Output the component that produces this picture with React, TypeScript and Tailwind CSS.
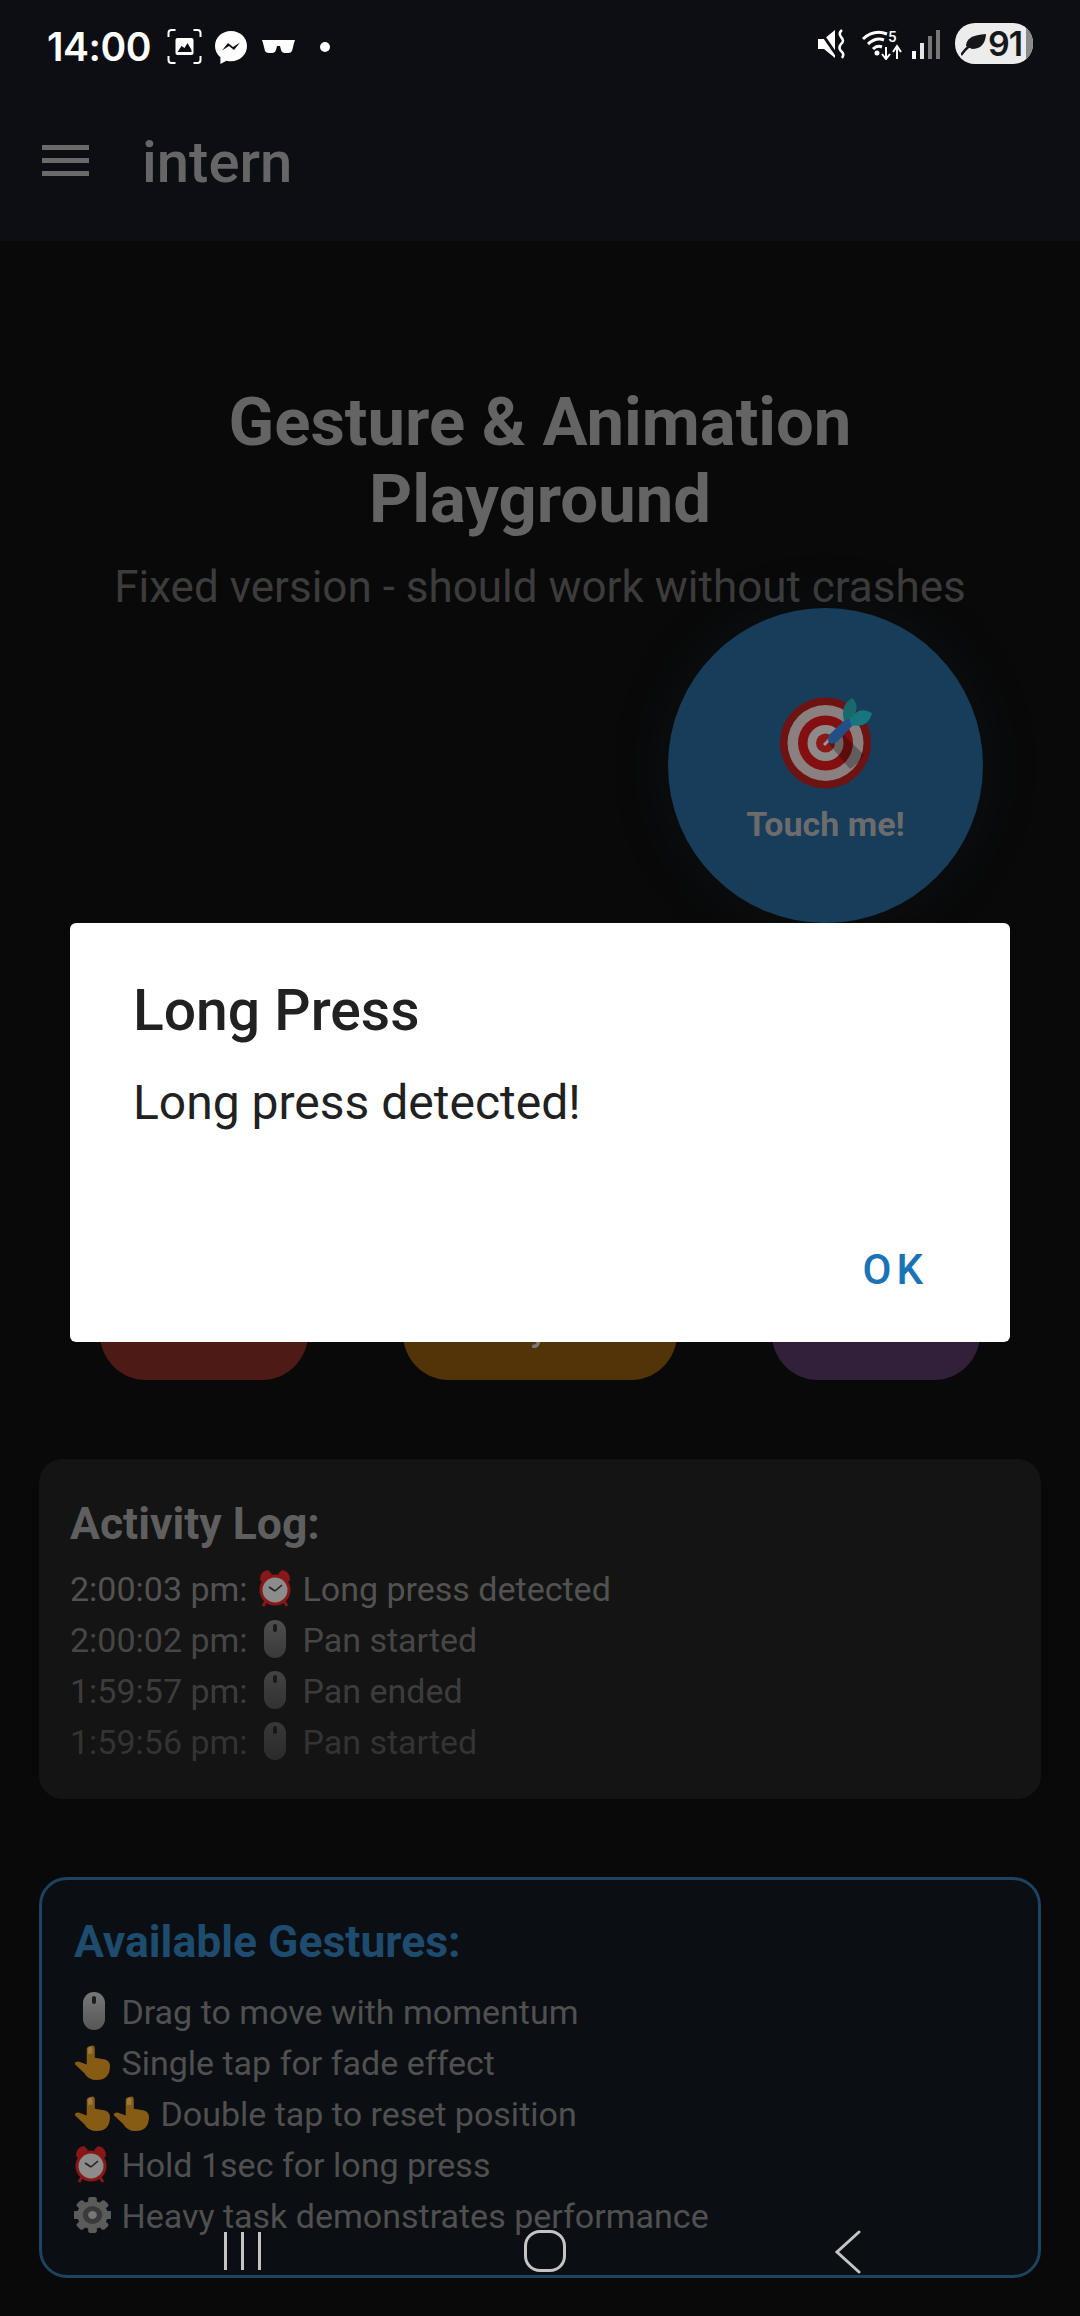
import React, { useId } from "react";

function Target({ size = 92 }: { size?: number }) {
  return (
    <svg width={size} height={size} viewBox="0 0 92 92">
      <circle cx="45.500" cy="46" r="45.500" fill="#6f1212" />
      <circle cx="45.500" cy="46" r="38" fill="#8a8080" />
      <circle cx="45.500" cy="46" r="27.500" fill="#840f10" />
      <circle cx="45.500" cy="46" r="18" fill="#8f8a8a" />
      <circle cx="45.500" cy="46" r="9.500" fill="#8a1a1a" />
      <path d="M48 46 L70 72 A44 44 0 0 0 84 58 L62 36 Z" fill="#000" opacity="0.28" />
      <path d="M44 48 L52 40" stroke="#9a9a9a" strokeWidth="3" />
      <path d="M49 38 L68 20 L75 26 L57 45 Q50 49 48 44 Z" fill="#214f86" />
      <path d="M64 24 Q60 8 72 1 Q80 8 74 20 Z" fill="#17696e" />
      <path d="M71 28 Q88 32 92 16 Q78 8 70 23 Z" fill="#17757f" />
    </svg>
  );
}

function Alarm() {
  return (
    <svg width="34" height="38" viewBox="0 0 34 38" className="inline-block align-[-6px]">
      <path d="M2 11 Q2 2 10 1 L14 5 L5 14 Z" fill="#8a1717" />
      <path d="M32 11 Q32 2 24 1 L20 5 L29 14 Z" fill="#8a1717" />
      <path d="M8 32 L5 37 M26 32 L29 37" stroke="#8a1717" strokeWidth="3" />
      <circle cx="17" cy="21" r="15.500" fill="#8a1717" />
      <circle cx="17" cy="21" r="12.500" fill="#8c8c8c" />
      <path d="M17 22 L11 18 M17 22 L24 16" stroke="#222" strokeWidth="1.600" />
    </svg>
  );
}

function Mouse({ top = "#5c5c5c", bottom = "#424242" }: { top?: string; bottom?: string }) {
  const id = useId();
  return (
    <svg width="24" height="38" viewBox="0 0 24 38" className="inline-block align-[-6px]">
      <defs>
        <linearGradient id={id} x1="0" y1="0" x2="0" y2="1">
          <stop offset="0" stopColor={top} />
          <stop offset="1" stopColor={bottom} />
        </linearGradient>
      </defs>
      <rect x="1" y="0" width="22" height="38" rx="11" fill={`url(#${id})`} />
      <rect x="10" y="4" width="4" height="8" rx="2" fill="#1c1c1c" />
    </svg>
  );
}

function Hand() {
  return (
    <svg width="37" height="37" viewBox="0 0 32 38" preserveAspectRatio="none" className="inline-block align-[-6px]">
      <path d="M14 2 Q18 0 18 5 L18 14 L27 16 Q32 18 31 25 Q30 37 20 37 Q12 37 9 30 L1 21 Q0 18 4 18 L11 21 L11 5 Q11 3 14 2 Z" fill="#865b14" />
      <path d="M13 3 Q16 2 16 6 L16 10 L12 10 L12 5 Z" fill="#9a7a40" />
    </svg>
  );
}

function Gear() {
  return (
    <svg width="37" height="38" viewBox="0 0 34 38" preserveAspectRatio="none" className="inline-block align-[-6px]">
      <g fill="#5b5b5b">
        <circle cx="17" cy="19" r="14" />
        <rect x="13" y="1" width="8" height="36" rx="2" />
        <rect x="13" y="1" width="8" height="36" rx="2" transform="rotate(45 17 19)" />
        <rect x="13" y="1" width="8" height="36" rx="2" transform="rotate(90 17 19)" />
        <rect x="13" y="1" width="8" height="36" rx="2" transform="rotate(135 17 19)" />
      </g>
      <circle cx="17" cy="19" r="9" fill="#3a3a3a" />
      <circle cx="17" cy="19" r="4" fill="#777" />
    </svg>
  );
}

function StatusLeft() {
  return (
    <div className="flex items-center">
      <span className="text-[39px] leading-none font-semibold text-white tracking-[-0.5px] font-['Inter',sans-serif] w-[120px]">14:00</span>
      <svg width="35" height="35" viewBox="0 0 34 35" fill="none">
        <path d="M1 8V4Q1 1 4 1H8M26 1H30Q33 1 33 4V8M33 27V31Q33 34 30 34H26M8 34H4Q1 34 1 31V27" stroke="#fff" strokeWidth="2" />
        <rect x="8" y="9" width="18" height="17" rx="2" fill="#fff" />
        <path d="M10 23 L14 17 L17 19 L20 14 L24 21 V23 Z" fill="#0d0e13" />
      </svg>
      <svg width="34" height="34" viewBox="0 0 34 34" className="ml-[12px]">
        <path d="M17 1C8 1 1 7.5 1 16c0 4.6 2 8.5 5.400 11.200V34l6-3.300c1.500.4 3 .6 4.600.6 9 0 16-6.800 16-15.300S26 1 17 1Z" fill="#fff" />
        <path d="M8 20.500 14 13l5 4 7-4.500-6 7.500-5-4z" fill="#0d0e13" />
      </svg>
      <svg width="33" height="13" viewBox="0 0 33 13" className="ml-[14px]">
        <path d="M0 0H33L32 3 30 11Q29 13 26 13H23Q20 13 19 10L18 6H15L14 10Q13 13 10 13H7Q4 13 3 11L1 3Z" fill="#fff" />
      </svg>
      <div className="ml-[25px] w-[10px] h-[10px] rounded-full bg-white" />
    </div>
  );
}

function StatusRight() {
  return (
    <div className="flex items-center">
      <svg width="30" height="30" viewBox="0 0 30 30">
        <path d="M0 10H6L17 1V29L6 20H0Z" fill="#fff" />
        <path d="M2 2 L20 28" stroke="#0d0e13" strokeWidth="3" />
        <path d="M24 1 Q20 4 23 8 Q27 12 23 15 Q20 19 23 22 Q27 25 24 29" stroke="#fff" strokeWidth="2.500" fill="none" />
      </svg>
      <svg width="40" height="32" viewBox="0 0 40 32" className="ml-[14px]" fill="none">
        <path d="M1 11 Q12 1 25 6" stroke="#fff" strokeWidth="3" />
        <path d="M6 16 Q14 9 22 12" stroke="#fff" strokeWidth="3" />
        <path d="M11 21 Q15 17 20 19" stroke="#fff" strokeWidth="3" />
        <circle cx="15" cy="25" r="2.500" fill="#fff" />
        <text x="26" y="14" fill="#fff" fontSize="15" fontFamily="Roboto, sans-serif" fontWeight="500">5</text>
        <path d="M24 19V30M20 26L24 31L28 26M35 31V20M31 24L35 18L39 24" stroke="#fff" strokeWidth="2" />
      </svg>
      <div className="ml-[10px] flex items-end gap-[4px] h-[30px]">
        <div className="w-[4px] h-[8px] bg-white" />
        <div className="w-[4px] h-[16px] bg-[#e5e5e5]" />
        <div className="w-[4px] h-[23px] bg-[#777]" />
        <div className="w-[4px] h-[29px] bg-[#777]" />
      </div>
      <div className="ml-[15px] relative w-[78px] h-[41px] rounded-[20px] overflow-hidden bg-[#ececec] flex items-center">
        <div className="absolute right-0 top-0 bottom-0 w-[7px] bg-[#8a8a8a]" />
        <svg width="26" height="24" viewBox="0 0 26 24" className="ml-[6px] shrink-0">
          <path d="M5 14 Q5 3 25 2 Q24 17 11 17 Z" fill="#16171b" />
          <path d="M0 23 Q8 12 17 9" stroke="#16171b" strokeWidth="2.500" fill="none" />
        </svg>
        <span className="relative ml-[1px] text-[34px] leading-none font-semibold text-[#16171b] font-['Inter',sans-serif] tracking-[-1px]">91</span>
      </div>
    </div>
  );
}

const logs = [
  { t: "2:00:03 pm:", label: "Long press detected", icon: <Alarm />, cls: "opacity-100" },
  { t: "2:00:02 pm:", label: "Pan started", icon: <Mouse />, cls: "opacity-[0.82]" },
  { t: "1:59:57 pm:", label: "Pan ended", icon: <Mouse />, cls: "opacity-[0.66]" },
  { t: "1:59:56 pm:", label: "Pan started", icon: <Mouse />, cls: "opacity-[0.5]" },
];

export default function App() {
  return (
    <div className="relative w-[1080px] h-[2316px] overflow-hidden bg-[#090909] font-['Roboto',sans-serif]">
      <header className="h-[241px] bg-[#0d0e13]">
        <div className="h-[92px] pl-[47px] pr-[47px] pt-[23px] flex items-start justify-between">
          <div className="pt-[4px]"><StatusLeft /></div>
          <StatusRight />
        </div>
        <div className="flex items-center h-[140px] pl-[42px] pb-[4px]">
          <div className="flex flex-col gap-[8px] w-[47px]">
            <div className="h-[5px] bg-[#6a6a6a]" />
            <div className="h-[5px] bg-[#6a6a6a]" />
            <div className="h-[5px] bg-[#6a6a6a]" />
          </div>
          <span className="ml-[53px] mt-[4px] text-[58px] leading-none font-medium text-[#666666]">intern</span>
        </div>
      </header>

      <main className="px-[39px]">
        <div className="pt-[143px] text-center">
          <h1 className="text-[67px] leading-[77px] font-bold text-[#646464]">
            Gesture &amp; Animation
            <br />
            Playground
          </h1>
          <p className="mt-[19px] text-[44px] leading-[60px] text-[#3c3c3c]">Fixed version - should work without crashes</p>
        </div>

        <div className="mt-[663px] mx-[61px] flex justify-between h-[100px]">
          <div className="w-[208px] rounded-t-[10px] rounded-b-[46px] bg-[#4d1a16]" />
          <div className="w-[274px] rounded-b-[46px] bg-[#523408] text-center text-[34px] leading-[40px] font-medium text-[#7a7a7a] pt-[29px]">Heavy Task</div>
          <div className="w-[208px] rounded-b-[46px] bg-[#32203a]" />
        </div>

        <section className="mt-[79px] h-[340px] rounded-[24px] bg-[#141414] px-[31px] pt-[40px]">
          <h2 className="text-[44.500px] leading-[50px] font-bold text-[#5f5f5f]">Activity Log:</h2>
          <div className="mt-[15px]">
            {logs.map((l) => (
              <div key={l.t} className={`text-[34px] leading-[51px] text-[#525252] whitespace-pre ${l.cls}`}>
                {l.t}{" "}
                <span className="inline-block w-[38px] text-center">{l.icon}</span>{" "}
                {l.label}
              </div>
            ))}
          </div>
        </section>

        <section className="mt-[78px] h-[401px] rounded-[28px] border-[3px] border-[#1c4360] bg-[#0b0f13] px-[32px] pt-[37px]">
          <h2 className="text-[44.500px] leading-[50px] font-bold text-[#1d4c6e]">Available Gestures:</h2>
          <div className="mt-[20px] text-[34px] leading-[51px] text-[#505050] whitespace-pre">
            <div><span className="inline-block w-[39px] text-center"><Mouse top="#787878" bottom="#565656" /></span>{" "}Drag to move with momentum</div>
            <div><span className="inline-block w-[39px]"><Hand /></span>{" "}Single tap for fade effect</div>
            <div><span className="inline-block w-[39px]"><Hand /></span><span className="inline-block w-[39px]"><Hand /></span>{" "}Double tap to reset position</div>
            <div><span className="inline-block w-[39px]"><Alarm /></span>{" "}Hold 1sec for long press</div>
            <div><span className="inline-block w-[39px]"><Gear /></span>{" "}Heavy task demonstrates performance</div>
          </div>
        </section>
      </main>

      {/* draggable ball */}
      <div className="absolute left-[668px] top-[608px] w-[315px] h-[315px] rounded-full bg-[#173d5a] shadow-[0_0_60px_rgba(23,61,90,0.15)] flex flex-col items-center">
        <div className="mt-[89px]"><Target /></div>
        <span className="mt-[15px] text-[34px] leading-[40px] font-bold text-[#6c6c6c]">Touch me!</span>
      </div>

      {/* alert dialog */}
      <div className="absolute left-[70px] top-[923px] w-[940px] h-[419px] rounded-[6px] bg-white flex flex-col">
        <div className="pl-[63px] pt-[56px]">
          <div className="text-[57px] leading-[64px] font-medium text-[#212121]">Long Press</div>
          <div className="mt-[30px] text-[48px] leading-[60px] text-[#212121]">Long press detected!</div>
        </div>
        <div className="mt-auto flex justify-end pr-[82px] pb-[46px]">
          <span className="text-[42px] leading-[52px] font-medium tracking-[5px] text-[#1a73b5]">OK</span>
        </div>
      </div>

      {/* system navigation */}
      <div className="absolute left-0 right-0 bottom-[44px] h-[42px]">
        <div className="absolute left-[224px] top-[2px] flex gap-[14px]">
          <div className="w-[3px] h-[38px] bg-[#c4c4c4]" />
          <div className="w-[3px] h-[38px] bg-[#c4c4c4]" />
          <div className="w-[3px] h-[38px] bg-[#c4c4c4]" />
        </div>
        <div className="absolute left-[524px] top-0 w-[42px] h-[42px] rounded-[16px] border-[3px] border-[#c4c4c4]" />
        <svg width="28" height="44" viewBox="0 0 28 44" fill="none" className="absolute left-[834px] top-0">
          <path d="M25 2 L3 22 L25 42" stroke="#c4c4c4" strokeWidth="3" strokeLinecap="round" strokeLinejoin="miter" />
        </svg>
      </div>
    </div>
  );
}
